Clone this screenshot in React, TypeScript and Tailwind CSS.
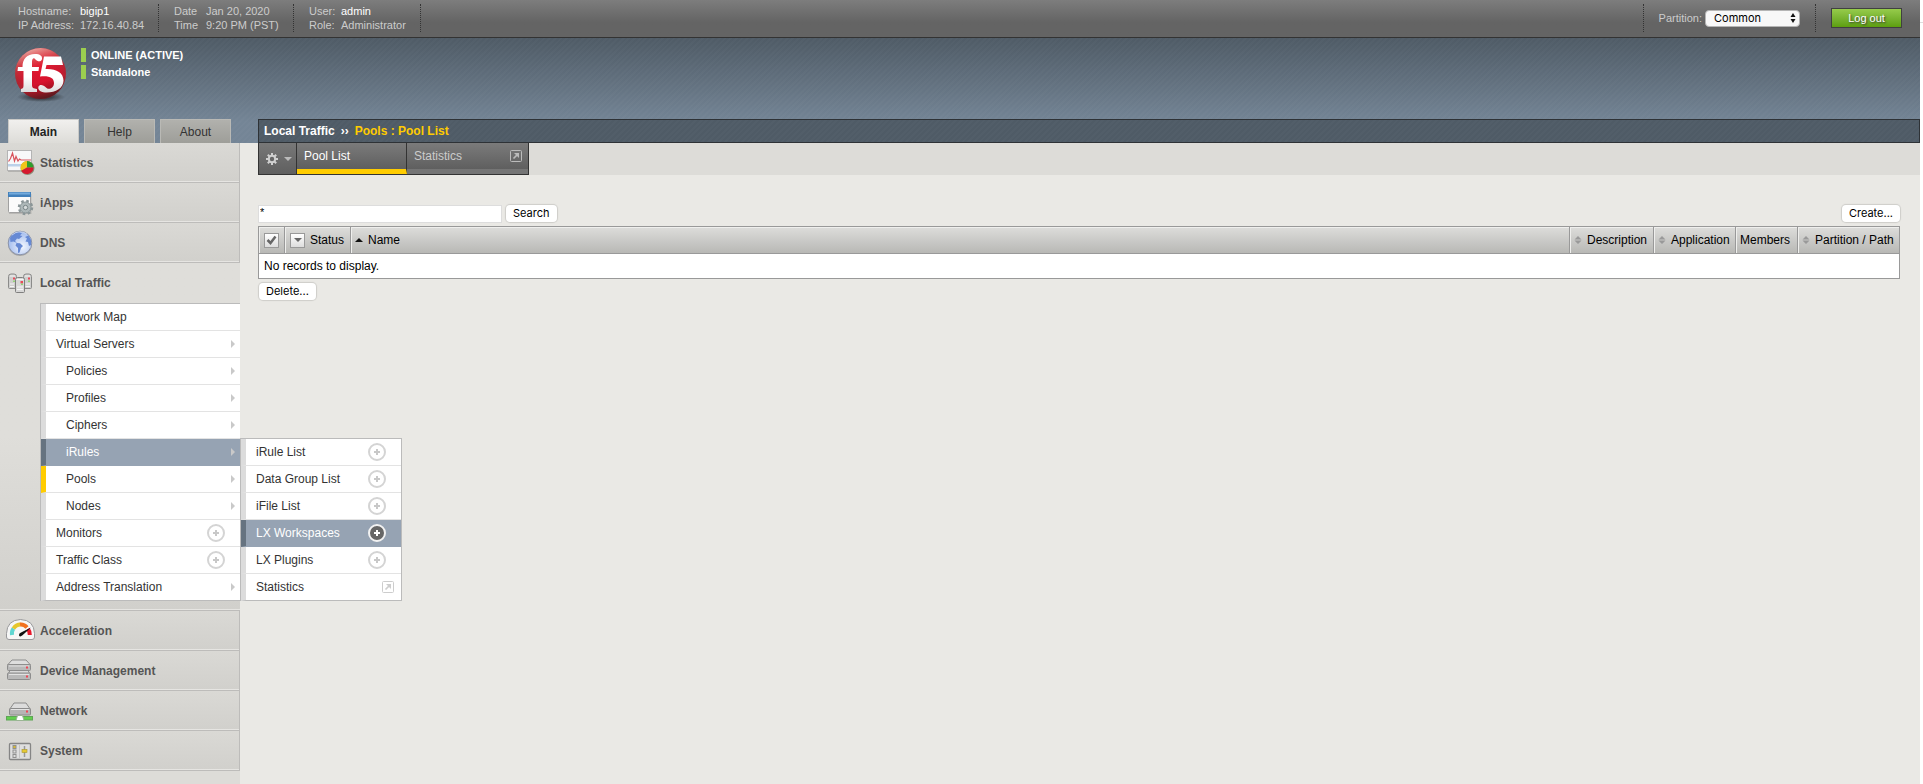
import type { ReactNode } from "react";

const stripes =
  "bg-[repeating-linear-gradient(135deg,rgba(255,255,255,0.02)_0px,rgba(255,255,255,0.02)_2px,transparent_2px,transparent_4px)]";

function StatisticsIcon() {
  return (
    <svg width="30" height="28" viewBox="0 0 30 28" aria-hidden="true">
      <rect x="3" y="2.5" width="24" height="20.5" fill="#000" opacity="0.15" />
      <rect x="2.5" y="1.5" width="24" height="20" fill="#f8f8f9" stroke="#b4b4b4" />
      <rect x="3" y="15" width="23" height="2.5" fill="#bcd2ea" />
      <path d="M3.5 12.5 L5.5 9.5 L7.5 4 L9.5 12 L11 7.5 L13 12 L14.5 10 L16 11 L26 11" fill="none" stroke="#d9535c" strokeWidth="1.2" />
      <circle cx="22.5" cy="19" r="7" fill="#5b5b3b" opacity="0.6" />
      <path d="M22 18.500 V12 A6.500 6.500 0 0 0 16.400 21.700 Z" fill="#f0c419" />
      <path d="M22 18.500 V12 A6.500 6.500 0 0 1 28.500 18.500 Z" fill="#2f9e2c" />
      <path d="M22 18.500 H28.500 A6.500 6.500 0 0 1 16.400 21.700 Z" fill="#d5192f" />
    </svg>
  );
}

function AppsIcon() {
  return (
    <svg width="30" height="28" viewBox="0 0 30 28" aria-hidden="true">
      <rect x="4" y="5" width="22.500" height="20" fill="#000" opacity="0.12" />
      <rect x="3.500" y="3.500" width="22" height="20" rx="1" fill="#fbfbfb" stroke="#a0a0a0" />
      <rect x="3" y="3" width="23" height="5" fill="#4280bb" />
      <rect x="4" y="3.500" width="21" height="2" fill="#74abdd" />
      <circle cx="20.500" cy="18.500" r="6.500" fill="none" stroke="#8b9698" strokeWidth="2.500" strokeDasharray="2.550 2.550" />
      <circle cx="20.500" cy="18.500" r="5.500" fill="#adb7b8" stroke="#88949" />
      <circle cx="20.500" cy="18.500" r="5.500" fill="none" stroke="#889496" />
      <circle cx="20.500" cy="18.500" r="2.200" fill="#d6dbdb" stroke="#788486" />
    </svg>
  );
}

function GlobeIcon() {
  return (
    <svg width="30" height="28" viewBox="0 0 30 28" aria-hidden="true">
      <defs>
        <radialGradient id="globe" cx="0.600" cy="0.650" r="0.700">
          <stop offset="0" stopColor="#f2f6fe" />
          <stop offset="1" stopColor="#98b4ec" />
        </radialGradient>
      </defs>
      <circle cx="15" cy="15" r="12" fill="#000" opacity="0.2" />
      <circle cx="15" cy="14" r="11.800" fill="url(#globe)" stroke="#8b94ab" />
      <path d="M5 9 Q8 4 13 3 L17 4 L15 6.500 L17.500 7 L14 10 L12 9.500 L10 12 L12 14 L8.500 12.500 L5.500 13 Z" fill="#6689d4" />
      <path d="M11.500 14 L15 14.200 L18 17 L16 19 L14.500 23.500 L13 24 L13 19 L10.500 16.500 Z" fill="#6689d4" />
      <path d="M20 8 L23.500 6.500 L26 11 L26 16 L24 17 L23 13 L20.500 12.500 L22 9.500 Z" fill="#6689d4" />
      <path d="M7 6 Q14 0 22 5" fill="none" stroke="#dbe6fb" opacity="0.700" />
    </svg>
  );
}

function TrafficIcon() {
  return (
    <svg width="30" height="28" viewBox="0 0 30 28" aria-hidden="true">
      <g transform="translate(0 2)">
        <g fill="#cfcfce" stroke="#8b8b8a">
          <path d="M3.500 5.500 Q3.500 3 6 3 L9 3 Q11.500 3 11.500 5.500 V17.500 H4.500 Q3.500 17.500 3.500 16.500 Z" />
          <path d="M18.500 5.500 Q18.500 3 21 3 L24 3 Q26.500 3 26.500 5.500 V16.500 Q26.500 17.500 25.500 17.500 H18.500 Z" />
        </g>
        <path d="M5 5 H10 M20 5 H25 M5 13 H9 M20.500 13 H25 M5 15.500 H9 M20.500 15.500 H25" stroke="#f4f4f4" />
        <path d="M10.500 8.500 Q10.500 6.500 12.500 6.500 H17.500 Q19.500 6.500 19.500 8.500 V20.500 Q19.500 21.500 18.500 21.500 H11.500 Q10.500 21.500 10.500 20.500 Z" fill="#d7d7d6" stroke="#7f7f7e" />
        <path d="M11.500 8.500 H18.500 M12 16 H18 M12 18.500 H18" stroke="#f6f6f6" />
        <rect x="8" y="6.500" width="2" height="2" fill="#ea4a58" />
        <rect x="23" y="6.500" width="2" height="2" fill="#ea4a58" />
        <rect x="15.500" y="10" width="2.500" height="2.500" fill="#ea4a58" />
        <rect x="16" y="12.500" width="2" height="1.500" fill="#93d375" />
        <rect x="23" y="9.500" width="2" height="1.500" fill="#93d375" />
        <rect x="8" y="9.500" width="2" height="1.500" fill="#93d375" />
      </g>
    </svg>
  );
}

function GaugeIcon() {
  return (
    <svg width="30" height="28" viewBox="0 0 30 28" aria-hidden="true">
      <path d="M1.500 16.500 Q2 3 15.500 2.500 Q29 3 29.500 16.500 V20 Q29.500 22.500 27 22.500 H4 Q1.500 22.500 1.500 20 Z" fill="#f6f6f6" stroke="#98989a" />
      <g fill="none" strokeWidth="4">
        <path d="M7 18 Q6.500 14 8.500 11.500" stroke="#5fd6d2" />
        <path d="M8.500 11.500 Q11 7.500 15.500 7.500" stroke="#e6c62c" />
        <path d="M15 7.500 Q19 7 22 10.500" stroke="#f2701d" />
        <path d="M23 12 Q25 14.500 24.800 18" stroke="#e8192c" />
      </g>
      <path d="M26 10.500 L17.500 18.300 Q15 20.500 14 18.500 Q13.500 16.500 16 15.500 Z" fill="#111" />
    </svg>
  );
}

function DevicesIcon() {
  return (
    <svg width="30" height="28" viewBox="0 0 30 28" aria-hidden="true">
      <g stroke="#8d8d8d">
        <path d="M2.500 18 L5 13.500 H23 L25.500 18 Z" fill="#d9d9d9" />
        <rect x="2.500" y="16" width="23" height="6.500" rx="1" fill="#b9b9b9" />
        <path d="M2.500 8 L7 3 H21 L25.500 8 Z" fill="#dedede" />
        <rect x="2.500" y="7.500" width="23" height="6" rx="1" fill="#b9b9b9" />
      </g>
      <path d="M4 9 H24 M4 17.500 H24" stroke="#e2e2e2" />
      <rect x="21" y="9.500" width="2" height="2" fill="#ee4455" />
      <rect x="21" y="18.500" width="2" height="2" fill="#ee4455" />
    </svg>
  );
}

function NetworkIcon() {
  return (
    <svg width="30" height="28" viewBox="0 0 30 28" aria-hidden="true">
      <path d="M4.500 12.500 L9 6 H21 L25.500 12.500 Z" fill="#dcdcdc" stroke="#8b8b8b" />
      <rect x="4.500" y="11.500" width="21" height="6.500" rx="1" fill="#b5b5b5" stroke="#8b8b8b" />
      <path d="M6 12.500 H24" stroke="#e4e4e4" />
      <rect x="21" y="13.500" width="2" height="2" fill="#ee4455" />
      <rect x="1.500" y="19.500" width="26" height="3.500" fill="#63cf4f" stroke="#5fa556" />
      <path d="M11 23.500 L12.500 18.500 H17.500 L19 23.500 Z" fill="#fff" stroke="#9ab594" />
    </svg>
  );
}

function SystemIcon() {
  return (
    <svg width="30" height="28" viewBox="0 0 30 28" aria-hidden="true">
      <rect x="4.500" y="6.500" width="21" height="16" rx="1" fill="#dfdfdf" stroke="#858585" strokeWidth="1.300" />
      <rect x="14" y="8" width="1" height="13" fill="#c4c4c4" />
      <g stroke="#909090" fill="#ddd">
        <rect x="8" y="8.500" width="3" height="3" fill="#d9b92f" />
        <rect x="8" y="13" width="3" height="3" />
        <rect x="8" y="17.500" width="3" height="3" />
      </g>
      <path d="M19.500 9 V20" stroke="#999" strokeWidth="1.500" />
      <rect x="17" y="12.500" width="5" height="3" fill="#e5c934" stroke="#a89430" strokeWidth="0.600" />
    </svg>
  );
}

function F5Logo() {
  return (
    <svg width="54" height="56" viewBox="0 0 54 56" role="img" aria-label="F5">
      <defs>
        <radialGradient id="ball" cx="0.500" cy="0.450" r="0.550">
          <stop offset="0" stopColor="#e50f2c" />
          <stop offset="0.700" stopColor="#cf1730" />
          <stop offset="1" stopColor="#a32a33" />
        </radialGradient>
        <linearGradient id="shine" x1="0.200" y1="0" x2="0.500" y2="1">
          <stop offset="0" stopColor="#f6d3c8" stopOpacity="0.900" />
          <stop offset="0.400" stopColor="#e66a5c" stopOpacity="0.150" />
          <stop offset="0.700" stopColor="#700" stopOpacity="0" />
          <stop offset="1" stopColor="#3c1518" stopOpacity="0.700" />
        </linearGradient>
        <radialGradient id="shade">
          <stop offset="0" stopColor="#111" stopOpacity="0.900" />
          <stop offset="1" stopColor="#111" stopOpacity="0" />
        </radialGradient>
        <linearGradient id="glyph" x1="0" y1="0" x2="0" y2="1">
          <stop offset="0.600" stopColor="#fff" />
          <stop offset="1" stopColor="#dcdcdc" />
        </linearGradient>
      </defs>
      <ellipse cx="27" cy="50" rx="24" ry="5" fill="url(#shade)" />
      <circle cx="26.500" cy="26.500" r="25.500" fill="url(#ball)" />
      <circle cx="26.500" cy="26.500" r="25.500" fill="url(#shine)" />
      <path
        d="M4 20 H8.500 C8.500 11.500 13 7.500 21 7 C26 7 28.500 9 28 12 C27.500 15 23.500 15 21.500 12.500 C20 10.500 18 11 18 15 V20 H25 L24.500 24 H18 V38 C18 41 19.500 41.500 23 42 V45 H7 V42 C9 41.500 9.500 41 9.500 38 V24 H3.500 Z"
        fill="url(#glyph)"
      />
      <path
        d="M30 9.500 H47 L49 18 H32.500 L31.500 22 C42 21.500 49.500 25.500 49.500 33.500 C49.500 41.500 41 46 31 45.500 C26 45 23.500 42.500 24.500 39.500 C25.500 37 29.500 37.500 32 40.500 C34.500 43.500 40 41 40 36 C40 30.500 35 28.500 26 29.500 Z"
        fill="url(#glyph)"
      />
    </svg>
  );
}

function PlusBadge({ active = false }: { active?: boolean }) {
  return (
    <svg width="20" height="20" viewBox="0 0 20 20" aria-hidden="true" className="shrink-0">
      <circle cx="10" cy="10" r="8" fill={active ? "#666" : "#fff"} stroke={active ? "#f2f2f2" : "#d4d4d4"} strokeWidth="2" />
      <path d="M10 7 V13 M7 10 H13" stroke={active ? "#fff" : "#c8c8c8"} strokeWidth="2" />
    </svg>
  );
}

function PopOutIcon({ color }: { color: string }) {
  return (
    <svg width="12" height="12" viewBox="0 0 12 12" aria-hidden="true" className="shrink-0" stroke={color} fill="none">
      <rect x="0.500" y="0.500" width="11" height="11" rx="1" />
      <path d="M3.500 8.500 L7.500 4.500" strokeWidth="1.700" />
      <path d="M4 3 H9 V8 Z" fill={color} stroke="none" />
    </svg>
  );
}

function Caret() {
  return (
    <svg width="4" height="8" viewBox="0 0 4 8" aria-hidden="true" className="shrink-0">
      <path d="M0 0 L4 4 L0 8 Z" fill="#c9c9c9" />
    </svg>
  );
}

type Trailing = "arrow" | "plus" | "popout" | "none";
type MenuEntry = { label: string; trailing: Trailing; nested?: boolean; state?: "hover" | "current" };

const trafficMenu: MenuEntry[] = [
  { label: "Network Map", trailing: "none" },
  { label: "Virtual Servers", trailing: "arrow" },
  { label: "Policies", trailing: "arrow", nested: true },
  { label: "Profiles", trailing: "arrow", nested: true },
  { label: "Ciphers", trailing: "arrow", nested: true },
  { label: "iRules", trailing: "arrow", nested: true, state: "hover" },
  { label: "Pools", trailing: "arrow", nested: true, state: "current" },
  { label: "Nodes", trailing: "arrow", nested: true },
  { label: "Monitors", trailing: "plus" },
  { label: "Traffic Class", trailing: "plus" },
  { label: "Address Translation", trailing: "arrow" },
];

const rulesMenu: MenuEntry[] = [
  { label: "iRule List", trailing: "plus" },
  { label: "Data Group List", trailing: "plus" },
  { label: "iFile List", trailing: "plus" },
  { label: "LX Workspaces", trailing: "plus", state: "hover" },
  { label: "LX Plugins", trailing: "plus" },
  { label: "Statistics", trailing: "popout" },
];

function MenuLink({ entry }: { entry: MenuEntry }) {
  const hover = entry.state === "hover";
  const tone = hover
    ? "border-l-[#667380] border-b-[#96a3b3] bg-[#96a3b3] text-white"
    : entry.state === "current"
      ? "border-l-[#ffcc00] border-b-[#e3e3e3] bg-white text-[#333]"
      : "border-l-[#dcdcdc] border-b-[#e3e3e3] bg-white text-[#333]";
  const gap = entry.trailing === "plus" ? "pr-[14px]" : entry.trailing === "popout" ? "pr-[7px]" : "pr-[5px]";
  return (
    <a href="#" className={`flex h-[27px] items-center justify-between border-b border-l-[5px] ${tone} ${gap} ${entry.nested ? "pl-5" : "pl-[10px]"}`}>
      <span>{entry.label}</span>
      {entry.trailing === "arrow" && <Caret />}
      {entry.trailing === "plus" && <PlusBadge active={hover} />}
      {entry.trailing === "popout" && <PopOutIcon color="#cdcdcd" />}
    </a>
  );
}

function SectionLink({ icon, label }: { icon: ReactNode; label: string }) {
  return (
    <a
      href="#"
      className="flex h-10 items-center gap-[5px] border-r border-b border-[#bdbcba] bg-linear-to-b from-[#dad9d5] to-[#d1d0cc] pl-[5px] font-bold text-[#555] shadow-[inset_0_-1px_0_#e6e5e2]"
    >
      {icon}
      {label}
    </a>
  );
}

function Sidebar() {
  return (
    <nav className="w-[240px] shrink-0 bg-[#dddcd8]">
      <SectionLink icon={<StatisticsIcon />} label="Statistics" />
      <SectionLink icon={<AppsIcon />} label="iApps" />
      <SectionLink icon={<GlobeIcon />} label="DNS" />
      <div className="border-b border-[#bdbcba] bg-linear-to-b from-[#dfdeda] from-50% to-[#d1d0cc] pb-[9px] shadow-[inset_0_-1px_0_#e6e5e2]">
        <a href="#" className="flex h-10 items-center gap-[5px] pl-[5px] font-bold text-[#555]">
          <TrafficIcon />
          Local Traffic
        </a>
        <ul className="ml-10 border-t border-l border-[#bbb]">
          {trafficMenu.map((entry) => (
            <li key={entry.label} className="relative last:[&>a]:border-b-[#bbb]">
              <MenuLink entry={entry} />
              {entry.label === "iRules" && (
                <ul className="absolute -top-px left-full z-10 w-[162px] border-t border-r border-l border-[#bbb]">
                  {rulesMenu.map((rule) => (
                    <li key={rule.label} className="last:[&>a]:border-b-[#bbb]">
                      <MenuLink entry={rule} />
                    </li>
                  ))}
                </ul>
              )}
            </li>
          ))}
        </ul>
      </div>
      <SectionLink icon={<GaugeIcon />} label="Acceleration" />
      <SectionLink icon={<DevicesIcon />} label="Device Management" />
      <SectionLink icon={<NetworkIcon />} label="Network" />
      <SectionLink icon={<SystemIcon />} label="System" />
    </nav>
  );
}

function InfoGroup({ rows, columns }: { rows: [string, string, boolean][]; columns: string }) {
  return (
    <dl className={`grid h-7 content-center border-r border-dotted border-[#333] leading-[14px] ${columns}`}>
      {rows.map(([term, value, strong]) => (
        <div key={term} className="col-span-2 grid grid-cols-subgrid">
          <dt>{term}</dt>
          <dd className={strong ? "text-white" : ""}>{value}</dd>
        </div>
      ))}
    </dl>
  );
}

function TopBar() {
  return (
    <div className="flex h-[38px] items-start justify-between border-b border-[#333] bg-linear-to-b from-[#7d7d7d] to-[#646464] to-60% pt-1 pl-[18px] text-[11px] text-[#ccc]">
      <div className="flex gap-[15px]">
        <InfoGroup columns="grid-cols-[62px_78px]" rows={[["Hostname:", "bigip1", true], ["IP Address:", "172.16.40.84", false]]} />
        <InfoGroup columns="grid-cols-[32px_87px]" rows={[["Date", "Jan 20, 2020", false], ["Time", "9:20 PM (PST)", false]]} />
        <InfoGroup columns="grid-cols-[32px_79px]" rows={[["User:", "admin", true], ["Role:", "Administrator", false]]} />
      </div>
      <div className="flex h-7 items-center">
        <div className="flex h-7 items-center gap-[3px] border-x border-dotted border-[#333] px-[15px]">
          <label htmlFor="partition">Partition:</label>
          <div className="grid items-center">
            <select
              id="partition"
              className="col-start-1 row-start-1 h-[17px] w-[95px] appearance-none rounded-[4px] border border-[#b5b5b5] bg-[#f8f8f8] pl-2 font-['Inter',sans-serif] text-[11px] leading-[15px] text-black"
            >
              <option>Common</option>
            </select>
            <svg width="6" height="10" viewBox="0 0 6 10" aria-hidden="true" className="pointer-events-none col-start-1 row-start-1 mr-1 justify-self-end">
              <path d="M3 0 L5.500 4 H0.500 Z M3 10 L0.500 6 H5.500 Z" fill="#111" />
            </svg>
          </div>
        </div>
        <button
          type="button"
          className="mr-[18px] ml-[15px] h-5 w-[71px] border border-[#404040] bg-linear-to-b from-[#96cb4b] to-[#5d9f0d] text-white [text-shadow:1px_1px_2px_#333]"
        >
          Log out
        </button>
      </div>
    </div>
  );
}

function Banner() {
  const idleTab = "h-6 w-[71px] border border-b-0 border-[#b9b9b5] bg-linear-to-b from-[#b1b1ad] to-[#9e9e99] text-[#333]";
  return (
    <header className={`flex flex-col ${stripes}`}>
      <div className="flex h-[81px] gap-[13px] pt-[9px] pl-[14px]">
        <F5Logo />
        <div className="flex flex-col gap-[3px] pt-px text-[11px] leading-[14px] font-bold text-white">
          <p className="border-l-[5px] border-[#9cce4f] pl-[5px]">ONLINE (ACTIVE)</p>
          <p className="border-l-[5px] border-[#9cce4f] pl-[5px]">Standalone</p>
        </div>
      </div>
      <div className="flex">
        <div className="flex w-[258px] shrink-0 gap-[5px] pl-2">
          <button type="button" className="h-6 w-[71px] border border-b-0 border-[#c9c9c6] bg-linear-to-b from-[#f1f0ee] to-[#dddcd8] font-bold text-[#222]">
            Main
          </button>
          <button type="button" className={idleTab}>Help</button>
          <button type="button" className={idleTab}>About</button>
        </div>
        <h1 className={`flex h-6 grow items-center gap-[6px] border border-[#2e3236] bg-[#4f5b66] pl-[5px] font-bold text-white ${stripes}`}>
          <span>Local Traffic</span>
          <span>››</span>
          <span className="text-[#ffcc00]">Pools : Pool List</span>
        </h1>
      </div>
    </header>
  );
}

function SortMark() {
  return (
    <svg width="8" height="8" viewBox="0 0 8 8" aria-hidden="true" className="shrink-0">
      <path d="M4 0 L7.500 3.500 H0.500 Z M4 8 L0.500 4.500 H7.500 Z" fill="#999" />
    </svg>
  );
}

const pushButton =
  "h-[17px] rounded-[4px] bg-white px-[7px] font-['Inter',sans-serif] text-[11px] leading-[17px] text-black shadow-[0_0_1px_1px_rgba(0,0,0,0.12)]";
const headCell = "border-r border-[#999] p-0 text-left font-normal shadow-[inset_1px_1px_0_#efefed] last:border-r-0";

function PoolTable() {
  return (
    <table className="w-full table-fixed border-separate border-spacing-0 border border-[#999] bg-white text-black">
      <colgroup>
        <col className="w-[26px]" />
        <col className="w-[66px]" />
        <col />
        <col className="w-[84px]" />
        <col className="w-[82px]" />
        <col className="w-[62px]" />
        <col className="w-[101px]" />
      </colgroup>
      <thead>
        <tr className="h-[26px] bg-linear-to-b from-[#dddddb] to-[#b8b8b5]">
          <th className={headCell}>
            <label className="grid place-items-center" aria-label="Select all">
              <input type="checkbox" defaultChecked className="col-start-1 row-start-1 size-[15px] appearance-none border border-[#999] bg-linear-to-b from-white to-[#ddd]" />
              <svg width="11" height="10" viewBox="0 0 11 10" aria-hidden="true" className="pointer-events-none col-start-1 row-start-1">
                <path d="M1.500 5 L4.500 8 L9.500 1.500" fill="none" stroke="#666" strokeWidth="2.500" />
              </svg>
            </label>
          </th>
          <th className={headCell}>
            <div className="flex items-center gap-[5px] pl-[5px]">
              <button type="button" aria-label="Filter by status" className="grid size-[15px] place-items-center border border-[#999] bg-linear-to-b from-white to-[#ddd]">
                <svg width="8" height="4" viewBox="0 0 8 4" aria-hidden="true">
                  <path d="M0 0 H8 L4 4 Z" fill="#666" />
                </svg>
              </button>
              Status
            </div>
          </th>
          <th className={headCell}>
            <div className="flex items-center gap-[5px] pl-1">
              <svg width="8" height="4" viewBox="0 0 8 4" aria-hidden="true">
                <path d="M0 4 H8 L4 0 Z" fill="#111" />
              </svg>
              Name
            </div>
          </th>
          <th className={headCell}>
            <div className="flex items-center gap-[5px] pl-1"><SortMark />Description</div>
          </th>
          <th className={headCell}>
            <div className="flex items-center gap-[5px] pl-1"><SortMark />Application</div>
          </th>
          <th className={`${headCell} pl-1`}>Members</th>
          <th className={headCell}>
            <div className="flex items-center gap-[5px] pl-1"><SortMark />Partition / Path</div>
          </th>
        </tr>
      </thead>
      <tbody>
        <tr>
          <td colSpan={7} className="h-[25px] border-t border-[#999] px-[5px] py-0">No records to display.</td>
        </tr>
      </tbody>
    </table>
  );
}

function PoolList() {
  return (
    <main className="ml-[18px] min-w-0 grow">
      <div className="flex h-8 bg-[#dddcd8]">
        <div className="flex h-8 divide-x divide-[#333] border border-t-0 border-[#333] text-[#ccc]">
          <button type="button" aria-label="Options" className="flex w-[38px] items-center gap-[6px] bg-linear-to-b from-[#787878] to-[#5f5f5f] pl-[7px]">
            <svg width="12" height="12" viewBox="0 0 12 12" aria-hidden="true">
              <path d="M6 0 V12 M0 6 H12 M1.800 1.800 L10.200 10.200 M10.200 1.800 L1.800 10.200" stroke="#d0d0d0" strokeWidth="2" />
              <circle cx="6" cy="6" r="3.200" fill="#666" stroke="#d0d0d0" strokeWidth="2" />
            </svg>
            <svg width="8" height="4" viewBox="0 0 8 4" aria-hidden="true">
              <path d="M0 0 H8 L4 4 Z" fill="#bbb" />
            </svg>
          </button>
          <a href="#" className="w-[110px] border-b-[5px] border-b-[#ffcc00] bg-linear-to-b from-[#7b7b7b] to-[#5f5f5f] pt-[6px] pl-[7px] text-white">
            Pool List
          </a>
          <a href="#" className="flex w-[121px] items-start justify-between border-b-[5px] border-b-[#757575] bg-linear-to-b from-[#7b7b7b] to-[#5f5f5f] pt-[6px] pr-[6px] pl-[7px]">
            Statistics
            <span className="pt-px"><PopOutIcon color="#bbb" /></span>
          </a>
        </div>
      </div>
      <div className="flex flex-col pt-[30px] pr-5">
        <form className="flex h-[21px] items-start gap-1" onSubmit={(event) => event.preventDefault()}>
          <input
            type="text"
            aria-label="Search pools"
            defaultValue="*"
            className="h-[18px] w-[244px] border border-[#ddd] bg-white px-px pb-1 text-[11px] leading-3 text-black"
          />
          <button type="submit" className={pushButton}>Search</button>
          <button type="button" className={`${pushButton} ml-auto`}>Create...</button>
        </form>
        <PoolTable />
        <button type="button" className={`${pushButton} mt-1 ml-px self-start`}>Delete...</button>
      </div>
    </main>
  );
}

export default function App() {
  return (
    <div className="flex min-h-screen bg-white font-['Liberation_Sans',Arial,sans-serif] text-[12px] leading-[14px]">
      <div className="flex min-w-0 grow flex-col bg-[#eae9e5]">
        <TopBar />
        <div className="bg-linear-to-b from-[#4f5b66] to-[#748596] to-80%">
          <Banner />
        </div>
        <div className="flex grow">
          <Sidebar />
          <PoolList />
        </div>
      </div>
      <div className="w-[3px] shrink-0 pt-[22px]">
        <div className="h-px bg-[#ddd]" />
      </div>
    </div>
  );
}
